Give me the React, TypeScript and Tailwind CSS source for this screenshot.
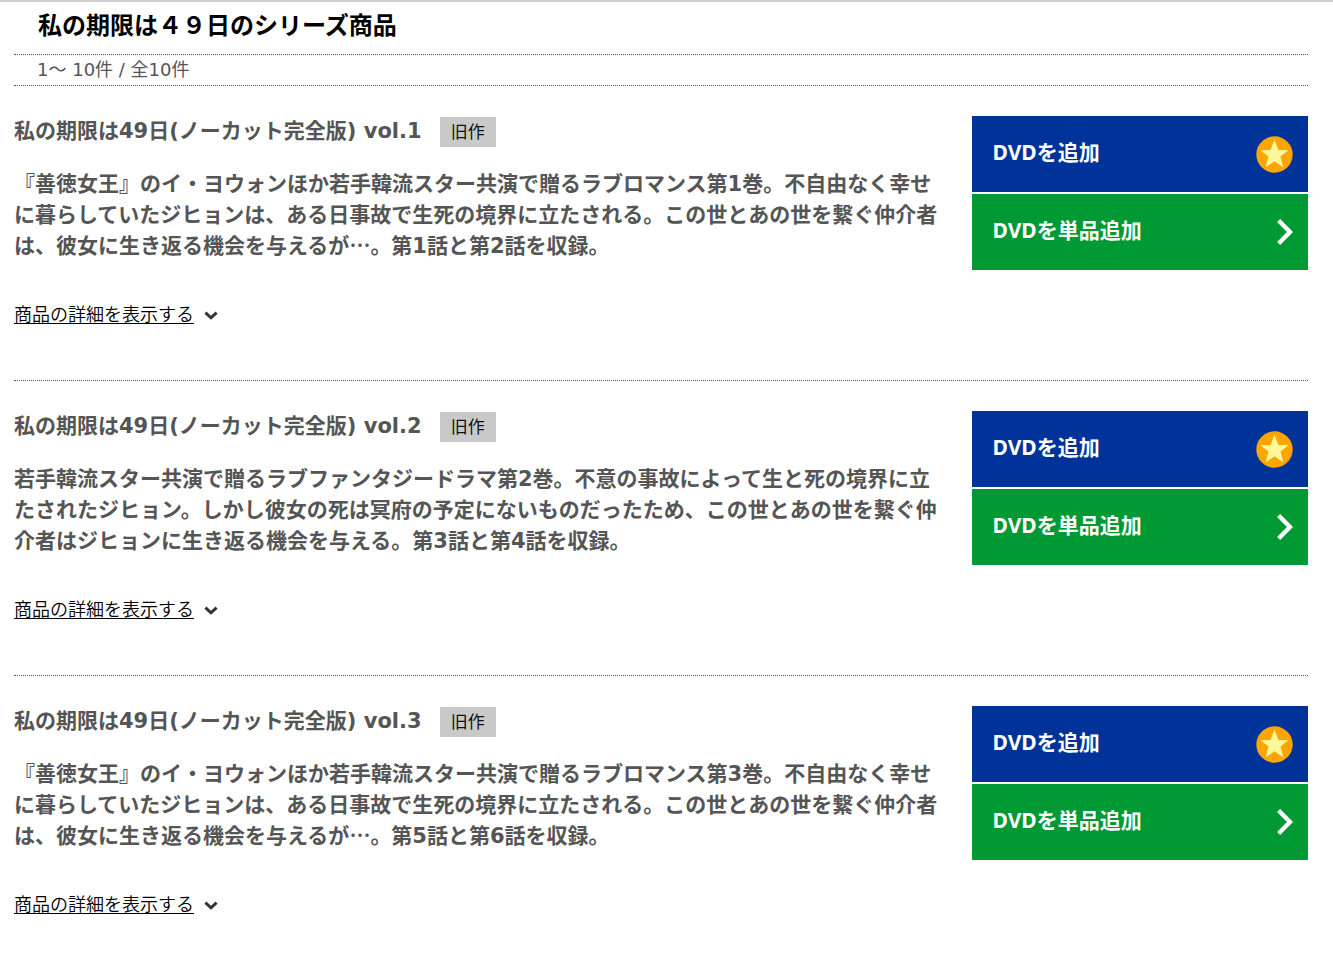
import { Fragment } from "react";

interface Product {
  id: number;
  title: string;
  description: string;
}

const products: Product[] = [
  {
    id: 1,
    title: "私の期限は49日(ノーカット完全版) vol.1",
    description:
      "『善徳女王』のイ・ヨウォンほか若手韓流スター共演で贈るラブロマンス第1巻。不自由なく幸せに暮らしていたジヒョンは、ある日事故で生死の境界に立たされる。この世とあの世を繋ぐ仲介者は、彼女に生き返る機会を与えるが…。第1話と第2話を収録。",
  },
  {
    id: 2,
    title: "私の期限は49日(ノーカット完全版) vol.2",
    description:
      "若手韓流スター共演で贈るラブファンタジードラマ第2巻。不意の事故によって生と死の境界に立たされたジヒョン。しかし彼女の死は冥府の予定にないものだったため、この世とあの世を繋ぐ仲介者はジヒョンに生き返る機会を与える。第3話と第4話を収録。",
  },
  {
    id: 3,
    title: "私の期限は49日(ノーカット完全版) vol.3",
    description:
      "『善徳女王』のイ・ヨウォンほか若手韓流スター共演で贈るラブロマンス第3巻。不自由なく幸せに暮らしていたジヒョンは、ある日事故で生死の境界に立たされる。この世とあの世を繋ぐ仲介者は、彼女に生き返る機会を与えるが…。第5話と第6話を収録。",
  },
];

function StarIcon() {
  return (
    <svg className="h-[37px] w-[37px]" viewBox="0 0 37 37" aria-hidden="true">
      <circle cx="18.5" cy="18.5" r="18.2" fill="#ffa500" />
      <path
        d="M18.5 3.4 L22.4 13.9 L32.6 14.2 L24.5 20.6 L27.4 31.6 L18.5 25.3 L9.6 31.6 L12.5 20.6 L4.4 14.2 L14.6 13.9 Z"
        fill="#fff799"
      />
    </svg>
  );
}

function ArrowIcon() {
  return (
    <svg className="h-[27px] w-4" viewBox="0 0 16 27" aria-hidden="true">
      <path d="M1.6 1.5 L13 13 L1.6 24.5" fill="none" stroke="#fff" strokeWidth="4.4" />
    </svg>
  );
}

function DownIcon() {
  return (
    <svg className="h-[9px] w-[14px]" viewBox="0 0 14 9" aria-hidden="true">
      <path d="M1.4 1.6 L7 6.8 L12.6 1.6" fill="none" stroke="#333" strokeWidth="3" />
    </svg>
  );
}

// The ellipsis has to come from the Japanese font, so that its dots sit mid-line
function Description({ text }: { text: string }) {
  return (
    <p className="mt-[22px] text-[21px] leading-[31px] font-bold">
      {text.split("…").map((part, index) => (
        <Fragment key={index}>
          {index > 0 && <span className="font-['Noto_Sans_CJK_JP',sans-serif] leading-none">…</span>}
          {part}
        </Fragment>
      ))}
    </p>
  );
}

function ProductItem({ product }: { product: Product }) {
  return (
    <li className="flex items-start justify-between border-t border-dotted border-[#555] pt-[30px] pb-[51px]">
      <div className="w-[72%]">
        <div className="flex items-start gap-[18px]">
          <h2 className="text-[21px] leading-[30px] font-bold">{product.title}</h2>
          <span className="mt-px bg-[#c9c9c9] px-[11px] text-[17px] leading-[30px] text-[#111]">
            旧作
          </span>
        </div>
        <Description text={product.description} />
        <a
          href="#"
          className="mt-[39px] flex items-center gap-[10px] text-[18px] leading-[28px] font-[350] text-black"
        >
          <span className="underline underline-offset-2">商品の詳細を表示する</span>
          <DownIcon />
        </a>
      </div>
      <div className="flex w-[26%] flex-col gap-0.5 font-['Noto_Sans','Noto_Sans_CJK_JP',sans-serif] text-[21px] font-bold text-white">
        <button
          type="button"
          className="flex h-[76px] items-center justify-between bg-[#003399] pr-[15px] pl-[21px]"
        >
          <span className="pb-0.5">DVDを追加</span>
          <StarIcon />
        </button>
        <button
          type="button"
          className="flex h-[76px] items-center justify-between bg-[#009933] pr-[15px] pl-[21px]"
        >
          <span className="pb-0.5">DVDを単品追加</span>
          <ArrowIcon />
        </button>
      </div>
    </li>
  );
}

export default function App() {
  return (
    <main
      lang="ja"
      className="border-t-2 border-[#d0d0d0] bg-white pr-[25px] pl-[14px] font-['DejaVu_Sans','Noto_Sans_CJK_JP',sans-serif] text-[#555]"
    >
      <h1 className="pt-[6px] pb-[10px] pl-6 text-[24px] leading-[36px] font-bold text-black">
        私の期限は４９日のシリーズ商品
      </h1>
      <p className="border-t border-dotted border-[#555] pl-[23px] text-[18px] leading-[30px]">
        1～ 10件 / 全10件
      </p>
      <ul>
        {products.map((product) => (
          <ProductItem key={product.id} product={product} />
        ))}
      </ul>
    </main>
  );
}
